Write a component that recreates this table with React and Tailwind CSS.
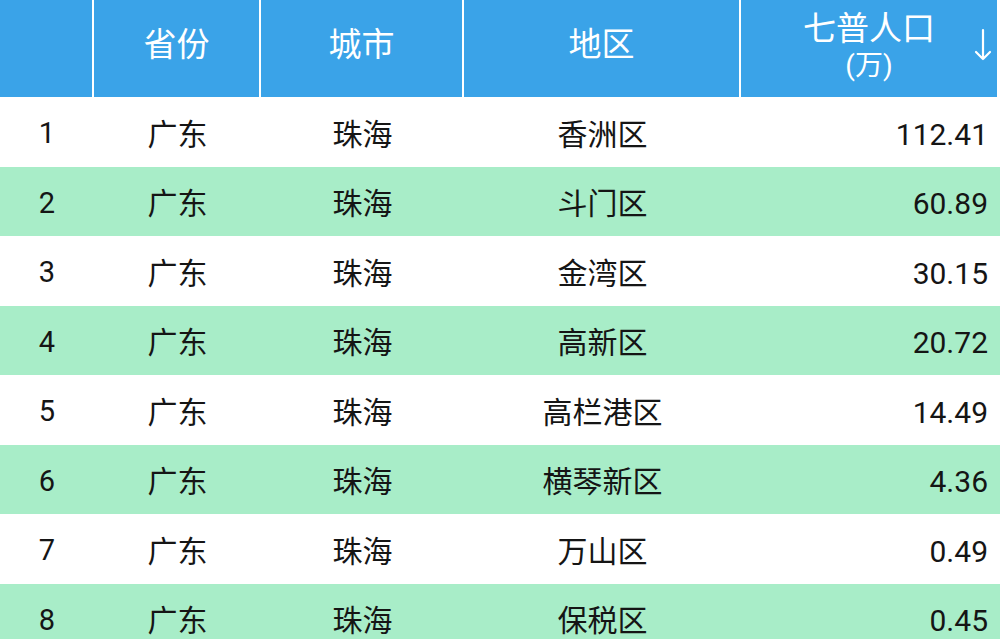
import React from 'react';

const rows = [
  ['1', '广东', '珠海', '香洲区', '112.41'],
  ['2', '广东', '珠海', '斗门区', '60.89'],
  ['3', '广东', '珠海', '金湾区', '30.15'],
  ['4', '广东', '珠海', '高新区', '20.72'],
  ['5', '广东', '珠海', '高栏港区', '14.49'],
  ['6', '广东', '珠海', '横琴新区', '4.36'],
  ['7', '广东', '珠海', '万山区', '0.49'],
  ['8', '广东', '珠海', '保税区', '0.45'],
];

const font = { fontFamily: 'Roboto, "Noto Sans CJK SC", sans-serif' };

export default function App() {
  return (
    <div className="w-[1000px] h-[639px] overflow-hidden bg-white" style={font}>
      {/* header */}
      <div className="grid grid-cols-[94px_167px_203px_277px_1fr] h-[97px] pr-[3px] bg-white">
        <div className="bg-[#3aa3e8] border-r-2 border-white" />
        <div className="bg-[#3aa3e8] border-r-2 border-white flex items-center justify-center pb-2 text-white text-[33px]">省份</div>
        <div className="bg-[#3aa3e8] border-r-2 border-white flex items-center justify-center pb-2 text-white text-[33px]">城市</div>
        <div className="bg-[#3aa3e8] border-r-2 border-white flex items-center justify-center pb-2 text-white text-[33px]">地区</div>
        <div className="bg-[#3aa3e8] relative flex flex-col items-center pt-[9px] text-white">
          <span className="text-[33px] leading-[40px]">七普人口</span>
          <span className="text-[28px] leading-[34px]">(万)</span>
          <svg className="absolute right-[5px] top-[28px]" width="18" height="33" viewBox="0 0 18 33" fill="none" stroke="white" strokeWidth="2.2" strokeLinecap="round" strokeLinejoin="round">
            <path d="M9 2v29M2 24l7 7 7-7" />
          </svg>
        </div>
      </div>
      {/* body */}
      {rows.map((r, i) => (
        <div
          key={r[0]}
          className={`grid grid-cols-[94px_167px_203px_277px_1fr] items-center pt-1 text-[#151515] ${
            i % 2 === 0 ? 'h-[70px] bg-white' : 'h-[69px] bg-[#a8edc8]'
          }`}
        >
          <div className="text-center text-[29px]">{r[0]}</div>
          <div className="text-center text-[30px]">{r[1]}</div>
          <div className="text-center text-[30px]">{r[2]}</div>
          <div className="text-center text-[30px]">{r[3]}</div>
          <div className="text-right pr-[12px] text-[30px]">{r[4]}</div>
        </div>
      ))}
    </div>
  );
}
